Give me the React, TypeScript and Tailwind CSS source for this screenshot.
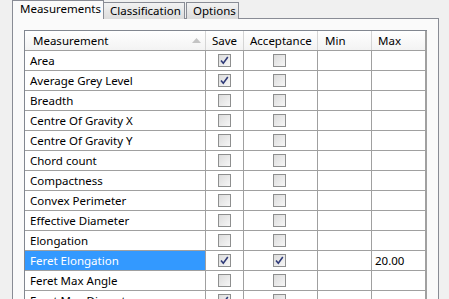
import React from "react";

type Row = {
  name: string;
  save: boolean;
  accept: boolean;
  min?: string;
  max?: string;
  selected?: boolean;
};

const rows: Row[] = [
  { name: "Area", save: true, accept: false },
  { name: "Average Grey Level", save: true, accept: false },
  { name: "Breadth", save: false, accept: false },
  { name: "Centre Of Gravity X", save: false, accept: false },
  { name: "Centre Of Gravity Y", save: false, accept: false },
  { name: "Chord count", save: false, accept: false },
  { name: "Compactness", save: false, accept: false },
  { name: "Convex Perimeter", save: false, accept: false },
  { name: "Effective Diameter", save: false, accept: false },
  { name: "Elongation", save: false, accept: false },
  { name: "Feret Elongation", save: true, accept: true, max: "20.00", selected: true },
  { name: "Feret Max Angle", save: false, accept: false },
  { name: "Feret Max Diameter", save: true, accept: false },
];

function Check({ on }: { on: boolean }) {
  return (
    <div className="w-[13px] h-[13px] border border-[#8e8f8f] bg-gradient-to-br from-[#dcdcdc] to-[#f6f6f6] flex items-center justify-center">
      {on && (
        <svg width="9" height="9" viewBox="0 0 9 9">
          <path d="M1 4.5 L3.3 7.2 L7.8 1" stroke="#2f3a78" strokeWidth="1.6" fill="none" />
        </svg>
      )}
    </div>
  );
}

const cols = "grid grid-cols-[181px_38px_74px_54px_53px]";

export default function App() {
  return (
    <div
      className="w-[449px] h-[299px] overflow-hidden bg-[#f0f0f0] text-[11.5px] text-black"
      style={{ fontFamily: '"Noto Sans", "Open Sans", sans-serif' }}
    >
      {/* Tabs */}
      <div className="flex items-end h-[19px] pl-[12px] relative z-10">
        <div className="h-[19px] w-[92px] bg-[#fafafa] border border-b-0 border-[#898c95] pl-[7px] leading-[15px]">
          Measurements
        </div>
        <div className="h-[17px] w-[82px] -ml-px bg-gradient-to-b from-[#f2f2f2] to-[#dcdcdc] border border-b-0 border-[#898c95] pl-[6px] leading-[15px]">
          Classification
        </div>
        <div className="h-[17px] w-[53px] ml-px bg-gradient-to-b from-[#f2f2f2] to-[#dcdcdc] border border-b-0 border-[#898c95] pl-[6px] leading-[15px]">
          Options
        </div>
      </div>

      {/* Panel */}
      <div className="-mt-px ml-[12px] w-[427px] h-[290px] bg-[#fafafa] border border-[#898c95] pt-[11px] pl-[11px]">
        <div className="w-[403px] bg-white border-l border-t border-[#828790] flex">
          <div>
            {/* Header */}
            <div className={`${cols} h-[20px] border-b border-[#a0a0a0] bg-gradient-to-b from-[#ffffff] to-[#f3f3f3]`}>
              <div className="border-r border-[#d5d5d5] flex items-center justify-between pl-[8px] pr-[4px]">
                <span>Measurement</span>
                <svg width="9" height="5" viewBox="0 0 9 5">
                  <path d="M0 5 L4.5 0 L9 5 Z" fill="#c4c4c4" />
                </svg>
              </div>
              <div className="border-r border-[#d5d5d5] flex items-center justify-center">Save</div>
              <div className="border-r border-[#d5d5d5] flex items-center pl-[6px]">Acceptance</div>
              <div className="border-r border-[#d5d5d5] flex items-center pl-[7px]">Min</div>
              <div className="flex items-center pl-[6px]">Max</div>
            </div>
            {/* Rows */}
            {rows.map((r) => (
              <div key={r.name} className={`${cols} h-[20px] border-b border-[#a0a0a0]`}>
                <div
                  className={`border-r border-[#a0a0a0] flex items-center pl-[5px] ${
                    r.selected ? "bg-[#3399ff] text-white" : ""
                  }`}
                >
                  {r.name}
                </div>
                <div className="border-r border-[#a0a0a0] flex items-center justify-center">
                  <Check on={r.save} />
                </div>
                <div className="border-r border-[#a0a0a0] flex items-center pl-[29px]">
                  <Check on={r.accept} />
                </div>
                <div className="border-r border-[#a0a0a0] flex items-center pl-[3px]">{r.min}</div>
                <div className="flex items-center pl-[3px]">{r.max}</div>
              </div>
            ))}
          </div>
          <div className="w-[3px] self-stretch bg-[#a0a0a0]" />
        </div>
      </div>
    </div>
  );
}
